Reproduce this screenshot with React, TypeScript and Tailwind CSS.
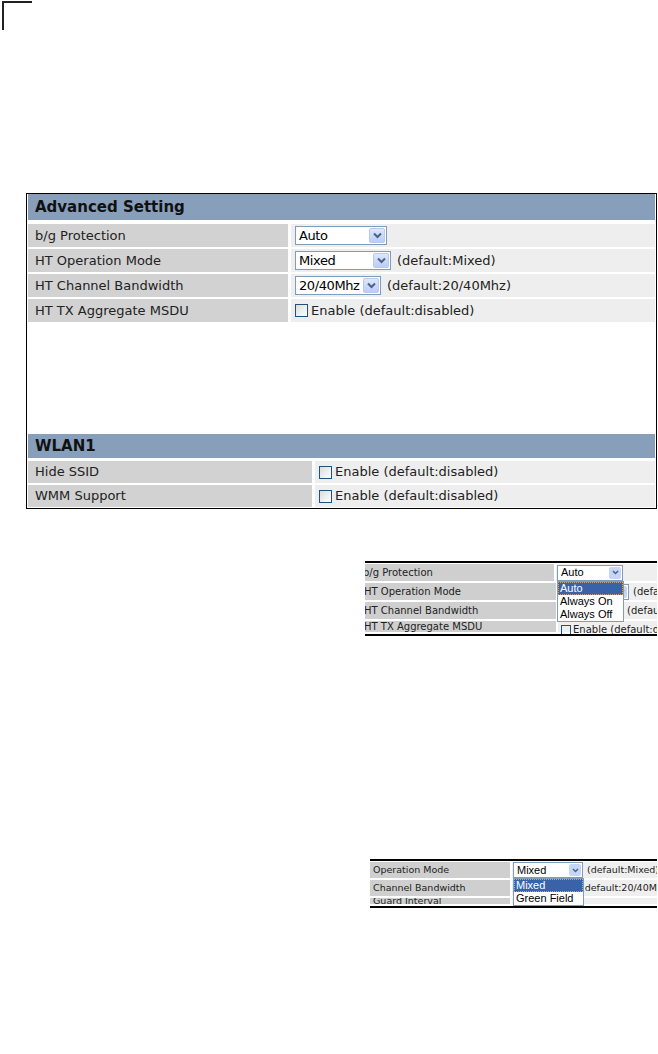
const Chevron = () => (
	<svg width="9" height="7" viewBox="0 0 9 7">
		<path d="M1 1.5 L4.5 5 L8 1.5" fill="none" stroke="#4d6185" strokeWidth="2" />
	</svg>
)

const Select = ({ value, width }: { value: string; width: string }) => (
	<div className={`flex items-center h-[19px] border border-[#7f9db9] bg-white shrink-0 ${width}`}>
		<span className="flex-1 pl-[3px] text-[13px] tracking-[-0.4px] leading-none text-black">{value}</span>
		<span className="flex items-center justify-center w-[16px] h-[15px] mr-[1px] rounded-[2px] border border-[#b9c9ef] bg-gradient-to-b from-[#dde7fd] to-[#b9cdf7]">
			<Chevron />
		</span>
	</div>
)

const Checkbox = () => (
	<span className="inline-block w-[13px] h-[13px] border border-[#1c5180] bg-gradient-to-br from-[#dcdcd7] to-white mr-[3px]" />
)

const Header = ({ title, h }: { title: string; h: string }) => (
	<div className={`${h} mx-[1px] flex items-center px-[7px] bg-[#879fba] text-[15px] font-bold text-[#111]`}>
		{title}
	</div>
)

const Row = ({
	label,
	labelW,
	children,
	h = 'h-[23px]',
}: {
	label: string
	labelW: string
	children: React.ReactNode
	h?: string
}) => (
	<div className={`flex gap-[3px] ${h} mx-[1px] mt-[2px] text-[13px] text-[#222]`}>
		<div className={`${labelW} shrink-0 bg-[#d2d2d2] flex items-center px-[7px]`}>{label}</div>
		<div className="flex-1 bg-[#eeeeee] flex items-center pl-[4px] gap-[6px]">{children}</div>
	</div>
)

const Enable = () => (
	<div className="flex items-center">
		<Checkbox />
		<span>Enable (default:disabled)</span>
	</div>
)

const Dropdown = ({ items, width }: { items: string[]; width: string }) => (
	<div className={`absolute left-0 top-[16px] ${width} bg-white border border-[#7f9db9] font-['Liberation_Sans'] text-[11px] leading-[13px] text-black z-10`}>
		{items.map((it, i) => (
			<div
				key={it}
				className={i === 0 ? 'bg-[#3a62a8] text-white px-[2px] outline-1 outline-dotted outline-[#e8a33c] -outline-offset-1' : 'px-[2px]'}
			>
				{it}
			</div>
		))}
	</div>
)

const SmallSelect = ({ value, width }: { value?: string; width: string }) => (
	<div className={`flex items-center h-[16px] border border-[#7f9db9] bg-white shrink-0 ${width}`}>
		<span className="flex-1 pl-[3px] font-['Liberation_Sans'] text-[11px] leading-none text-black">{value}</span>
		<span className="flex items-center justify-center w-[12px] h-[12px] mr-[1px] rounded-[2px] bg-[#c6d6f8]">
			<svg width="7" height="5" viewBox="0 0 7 5">
				<path d="M1 1 L3.5 3.5 L6 1" fill="none" stroke="#4d6185" strokeWidth="1.5" />
			</svg>
		</span>
	</div>
)

const SmallRow = ({
	label,
	labelW,
	children,
	h = 'h-[17px]',
}: {
	label: string
	labelW: string
	children?: React.ReactNode
	h?: string
}) => (
	<div className={`flex gap-[2px] ${h} mb-[2px] text-[#222]`}>
		<div className={`${labelW} shrink-0 bg-[#cfcfcf] flex items-center overflow-hidden whitespace-nowrap`}>{label}</div>
		<div className="flex-1 bg-[#efefef] flex items-center pl-[1px] gap-[4px] whitespace-nowrap">
			{children}
		</div>
	</div>
)

export default function App() {
	return (
		<div className="w-[658px] h-[1054px] bg-white font-['DejaVu_Sans',sans-serif] overflow-hidden">
			<div className="ml-[2px] mt-[1px] w-[30px] h-[29px] border-l-2 border-t-2 border-[#222]" />

			<div className="ml-[26px] mt-[163px] w-[631px] h-[316px] border border-black flex flex-col">
				<Header title="Advanced Setting" h="h-[26px]" />
				<div className="h-[2px]" />
				<Row label="b/g Protection" labelW="w-[260px]">
					<Select value="Auto" width="w-[92px]" />
				</Row>
				<Row label="HT Operation Mode" labelW="w-[260px]">
					<Select value="Mixed" width="w-[96px]" />
					<span>(default:Mixed)</span>
				</Row>
				<Row label="HT Channel Bandwidth" labelW="w-[260px]">
					<Select value="20/40Mhz" width="w-[86px]" />
					<span>(default:20/40Mhz)</span>
				</Row>
				<Row label="HT TX Aggregate MSDU" labelW="w-[260px]">
					<Enable />
				</Row>
				<div className="flex-1" />
				<Header title="WLAN1" h="h-[24px]" />
				<div className="h-[1px]" />
				<Row label="Hide SSID" labelW="w-[284px]" h="h-[22px]">
					<Enable />
				</Row>
				<Row label="WMM Support" labelW="w-[284px]" h="h-[22px]">
					<Enable />
				</Row>
				<div className="h-[1px]" />
			</div>

			<div className="ml-[365px] mt-[52px] w-[292px] border-t-2 border-b-2 border-black pt-[1px] overflow-hidden text-[10px]">
				<SmallRow label="b/g Protection" labelW="w-[192px] -ml-[3px] pl-[1px]">
					<div className="relative">
						<SmallSelect value="Auto" width="w-[66px]" />
						<Dropdown items={['Auto', 'Always On', 'Always Off']} width="w-[67px]" />
					</div>
				</SmallRow>
				<SmallRow label="HT Operation Mode" labelW="w-[192px] -ml-[1px]">
					<SmallSelect width="w-[70px]" />
					<span>(default:Mixed)</span>
				</SmallRow>
				<SmallRow label="HT Channel Bandwidth" labelW="w-[192px] -ml-[1px]">
					<SmallSelect width="w-[64px]" />
					<span>(default:20/40Mhz)</span>
				</SmallRow>
				<SmallRow label="HT TX Aggregate MSDU" labelW="w-[192px] -ml-[1px]" h="h-[11px]">
					<span className="ml-[2px] mt-[6px] flex items-center">
						<span className="inline-block w-[10px] h-[10px] border border-[#1c5180] mr-[2px]" />
						Enable (default:disabled)
					</span>
				</SmallRow>
			</div>

			<div className="ml-[370px] mt-[223px] w-[287px] border-t-2 border-b-2 border-black pt-[1px] overflow-hidden text-[9.5px]">
				<SmallRow label="Operation Mode" labelW="w-[140px] pl-[3px]" h="h-[16px]">
					<div className="relative">
						<SmallSelect value="Mixed" width="w-[70px]" />
						<Dropdown items={['Mixed', 'Green Field']} width="w-[71px]" />
					</div>
					<span>(default:Mixed)</span>
				</SmallRow>
				<SmallRow label="Channel Bandwidth" labelW="w-[140px] pl-[3px]" h="h-[16px]">
					<SmallSelect width="w-[64px]" />
					<span>(default:20/40Mhz)</span>
				</SmallRow>
				<SmallRow label="Guard Interval" labelW="w-[140px] pl-[3px]" h="h-[6px]" />
			</div>
		</div>
	)
}
